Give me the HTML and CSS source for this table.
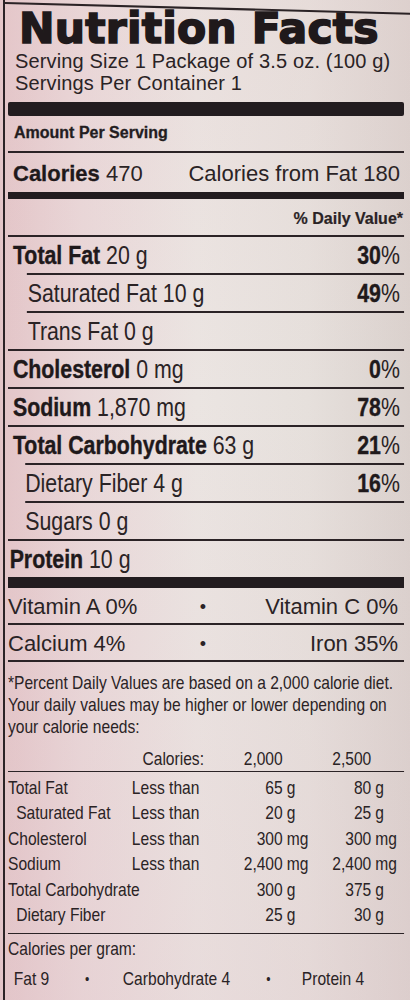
FILE: index.html
```html
<!DOCTYPE html>
<html>
<head>
<meta charset="utf-8">
<title>Nutrition Facts</title>
<link rel="stylesheet" href="styles.css">
</head>
<body>
<div class="label">
  <h1 class="title">Nutrition Facts</h1>
  <p class="serving">Serving Size 1 Package of 3.5 oz. (100 g)</p>
  <p class="serving">Servings Per Container 1</p>
  <div class="bar bar-thick"></div>
  <div class="amount">Amount Per Serving</div>
  <div class="cal-row"><span><b>Calories</b> 470</span><span>Calories from Fat 180</span></div>
  <div class="bar bar-mid"></div>
  <div class="dv-head">% Daily Value*</div>

  <div class="narrow">
    <div class="nrow"><span><b>Total Fat</b> 20 g</span><span class="pct"><b>30</b>%</span></div>
    <div class="nrow sub"><span>Saturated Fat 10 g</span><span class="pct"><b>49</b>%</span></div>
    <div class="nrow sub"><span>Trans Fat 0 g</span></div>
    <div class="nrow"><span><b>Cholesterol</b> 0 mg</span><span class="pct"><b>0</b>%</span></div>
    <div class="nrow"><span><b>Sodium</b> 1,870 mg</span><span class="pct"><b>78</b>%</span></div>
    <div class="nrow"><span><b>Total Carbohydrate</b> 63 g</span><span class="pct"><b>21</b>%</span></div>
    <div class="nrow sub2"><span>Dietary Fiber 4 g</span><span class="pct"><b>16</b>%</span></div>
    <div class="nrow sub2"><span>Sugars 0 g</span></div>
    <div class="nrow protein"><span><b>Protein</b> 10 g</span></div>
  </div>
  <div class="bar bar-low"></div>

  <div class="vrow"><span>Vitamin A 0%</span><span class="dot">•</span><span class="vr">Vitamin C 0%</span></div>
  <div class="vrow"><span>Calcium 4%</span><span class="dot">•</span><span class="vr">Iron 35%</span></div>

  <div class="narrow">
    <p class="foot">*Percent Daily Values are based on a 2,000 calorie diet.<br>Your daily values may be higher or lower depending on<br>your calorie needs:</p>

    <div class="trow thead"><span></span><span class="calhead">Calories:</span><span class="num">2,000</span><span></span><span class="num">2,500</span><span></span></div>
    <div class="tbody">
      <div class="trow"><span>Total Fat</span><span>Less than</span><span class="num">65</span><span class="unit">g</span><span class="num">80</span><span class="unit">g</span></div>
      <div class="trow"><span class="tind">Saturated Fat</span><span>Less than</span><span class="num">20</span><span class="unit">g</span><span class="num">25</span><span class="unit">g</span></div>
      <div class="trow"><span>Cholesterol</span><span>Less than</span><span class="num">300</span><span class="unit">mg</span><span class="num">300</span><span class="unit">mg</span></div>
      <div class="trow"><span>Sodium</span><span>Less than</span><span class="num">2,400</span><span class="unit">mg</span><span class="num">2,400</span><span class="unit">mg</span></div>
      <div class="trow"><span class="span2">Total Carbohydrate</span><span class="num">300</span><span class="unit">g</span><span class="num">375</span><span class="unit">g</span></div>
      <div class="trow"><span class="tind span2">Dietary Fiber</span><span class="num">25</span><span class="unit">g</span><span class="num">30</span><span class="unit">g</span></div>
    </div>

    <p class="pergram">Calories per gram:</p>
    <div class="grams"><span>Fat 9</span><span class="gdot g1">•</span><span class="g2">Carbohydrate 4</span><span class="gdot g3">•</span><span class="g4">Protein 4</span></div>
  </div>
</div>
</body>
</html>
```

FILE: styles.css
```css
* {
  box-sizing: border-box;
  margin: 0;
  padding: 0;
}

html,
body {
  width: 410px;
  height: 1000px;
  overflow: hidden;
}

body {
  background:
    linear-gradient(180deg, rgba(232, 205, 207, 0.22) 0%, rgba(255, 255, 255, 0) 40%, rgba(226, 198, 204, 0.3) 100%),
    linear-gradient(90deg, #e3c4c7 0%, #e9d7d8 20%, #ebe5e2 48%, #e6e0dc 75%, #dad1cd 100%);
  color: #2a2325;
  font-family: "Liberation Sans", Arial, sans-serif;
}

.label {
  position: relative;
  margin-left: 3px;
  height: 1000px;
  border-left: 2px solid #2b2326;
  padding: 8px 6px 0 3px;
  overflow: hidden;
}

.label::before {
  content: "";
  position: absolute;
  left: -2px;
  top: 2px;
  width: 412px;
  height: 1.5px;
  background: #2b2326;
  transform-origin: left center;
  transform: rotate(1.5deg);
}

/* Arial-Narrow-like text: Liberation Sans scaled horizontally.
   Inner horizontal sizes are in unscaled units (x / 0.82). */
.narrow {
  width: 482.9px;
  transform: scaleX(0.82);
  transform-origin: 0 0;
}

.title {
  font-family: "DejaVu Sans", "Liberation Sans", sans-serif;
  font-weight: bold;
  font-size: 42.5px;
  line-height: 42px;
  letter-spacing: 0.2px;
  padding-left: 11px;
  color: #1f191b;
  -webkit-text-stroke: 1.6px #1f191b;
}

.serving {
  font-size: 20px;
  line-height: 22px;
  padding-left: 7px;
  letter-spacing: 0.15px;
}

.bar {
  background: #221c1f;
}

.bar-thick {
  margin-top: 8px;
  height: 14px;
  border-radius: 2px;
}

.bar-mid {
  height: 7px;
}

.bar-low {
  height: 11px;
}

.amount {
  font-weight: bold;
  font-size: 16px;
  line-height: 18px;
  padding: 8px 6px 9px;
  border-bottom: 2px solid #2b2326;
  color: #231d1f;
  -webkit-text-stroke: 0.3px #231d1f;
}

.cal-row {
  display: flex;
  justify-content: space-between;
  font-size: 22px;
  line-height: 26px;
  padding: 8px 4px 5px 5px;
}

.cal-row b {
  color: #1f191b;
  -webkit-text-stroke: 0.3px #1f191b;
}

.dv-head {
  font-weight: bold;
  font-size: 16px;
  line-height: 20px;
  text-align: right;
  padding: 10px 1px 6px 0;
  -webkit-text-stroke: 0.2px #2a2325;
}

.nrow {
  display: flex;
  justify-content: space-between;
  font-size: 26px;
  line-height: 30px;
  padding: 3px 5px 3px 6px;
  border-top: 2px solid #2b2326;
}

.nrow b {
  color: #1f191b;
  -webkit-text-stroke: 0.4px #1f191b;
}

.nrow.sub {
  margin-left: 23px;
  padding-left: 1px;
}

.nrow.sub2 {
  margin-left: 21px;
  padding-left: 0;
}

.nrow.protein {
  padding-left: 2px;
}

.vrow {
  display: grid;
  grid-template-columns: 1fr auto 1fr;
  align-items: center;
  font-size: 22px;
  line-height: 26px;
  padding: 6px 6px 3px 0;
  border-bottom: 2px solid #2b2326;
}

.vrow .dot {
  font-size: 18px;
}

.vrow .vr {
  text-align: right;
}

.foot {
  margin-top: 10px;
  font-size: 19px;
  line-height: 22px;
}

.trow {
  display: grid;
  grid-template-columns: 151px 122px 62px 54px 54px 1fr;
  font-size: 19px;
  line-height: 25.5px;
}

.thead {
  margin-top: 8px;
  line-height: 25px;
  border-bottom: 1.5px solid #2b2326;
}

.calhead {
  padding-left: 13px;
}

.num {
  text-align: right;
}

.unit {
  padding-left: 5px;
}

.tind {
  padding-left: 10px;
}

.span2 {
  grid-column: span 2;
}

.tbody {
  padding-top: 2.5px;
  padding-bottom: 5px;
  border-bottom: 1.5px solid #2b2326;
}

.pergram {
  margin-top: 2.5px;
  font-size: 19px;
  line-height: 25px;
}

.grams {
  display: flex;
  margin-top: 5px;
  padding-left: 7px;
  font-size: 19px;
  line-height: 25px;
}

.gdot {
  font-size: 15px;
}

.g1 {
  margin-left: 43.5px;
}

.g2 {
  margin-left: 41px;
}

.g3 {
  margin-left: 44px;
}

.g4 {
  margin-left: 38px;
}
```
